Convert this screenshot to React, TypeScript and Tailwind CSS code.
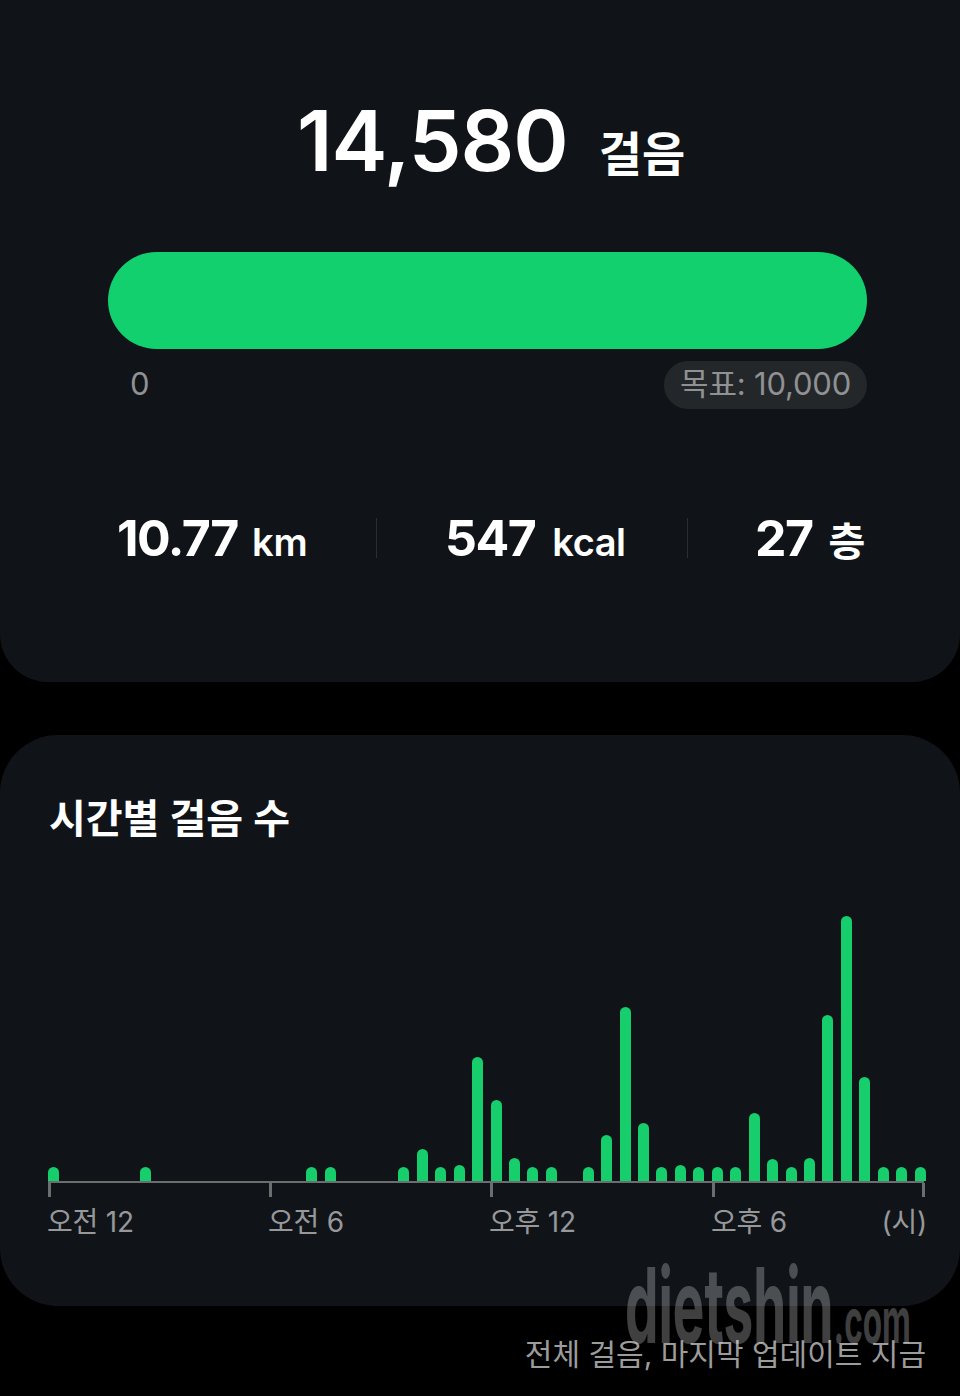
const heights: Record<number, number> = {
  0: 14, 5: 14, 14: 14, 15: 14, 19: 14, 20: 32, 21: 14, 22: 16, 23: 124, 24: 81, 25: 23, 26: 14, 27: 14,
  29: 14, 30: 46, 31: 174, 32: 58, 33: 14, 34: 16, 35: 14, 36: 14, 37: 14, 38: 68, 39: 22, 40: 14, 41: 23,
  42: 166, 43: 265, 44: 104, 45: 14, 46: 14, 47: 14,
};

const font = { fontFamily: '"Inter", "Noto Sans CJK KR", sans-serif' };
const slots = Array.from({ length: 48 }, (_, i) => heights[i] ?? 0);

function Tick() {
  return <div className="h-[14px] w-[3px] bg-[#6b6d6f]" />;
}

export default function App() {
  return (
    <div className="relative h-[1396px] w-[960px] overflow-hidden bg-black" style={font}>
      {/* Summary card */}
      <div className="h-[682px] rounded-b-[48px] bg-[#101419] pt-[93px]">
        <div className="ml-[297px] flex items-baseline text-white">
          <span className="text-[84px] leading-[96px] font-semibold tracking-[-1px]">14,580</span>
          <span className="ml-[31px] text-[47px] font-bold">걸음</span>
        </div>

        <div className="mt-[62px] ml-[108px] h-[97px] w-[759px] rounded-full bg-[#13d06f]" />

        <div className="mt-[12px] ml-[108px] flex w-[759px] items-center justify-between text-[31px] text-[#8f9193]">
          <span className="ml-[22px]">0</span>
          <span className="flex h-[48px] items-center rounded-full bg-[#24272a] px-[16px] tracking-[-0.2px]">목표: 10,000</span>
        </div>

        <div className="mt-[92px] flex items-center pl-[117px] text-white">
          <div className="flex w-[259px] items-baseline">
            <span className="text-[50px] font-bold tracking-[-1.5px]">10.77</span>
            <span className="ml-[14px] text-[38px] font-semibold">km</span>
          </div>
          <div className="h-[40px] w-[1px] bg-[#2a2d31]" />
          <div className="ml-[68px] flex w-[242px] items-baseline">
            <span className="text-[50px] font-bold tracking-[-1.5px]">547</span>
            <span className="ml-[17px] text-[38px] font-semibold tracking-[-0.5px]">kcal</span>
          </div>
          <div className="h-[40px] w-[1px] bg-[#2a2d31]" />
          <div className="ml-[67px] flex items-baseline">
            <span className="text-[50px] font-bold tracking-[-1.5px]">27</span>
            <span className="ml-[16px] text-[40px] leading-[40px] font-semibold">층</span>
          </div>
        </div>
      </div>

      {/* Hourly card */}
      <div className="mt-[53px] h-[571px] rounded-[58px] bg-[#101419] pt-[58px]">
        <h2 className="ml-[49px] text-[40px] leading-[52px] font-semibold text-white">시간별 걸음 수</h2>

        <div className="mt-[71px] ml-[48px] flex h-[265px] w-[878px] items-end justify-between">
          {slots.map((h, i) => (
            <div key={i} className="w-[11px] rounded-t-full bg-[#16cf6c]" style={{ height: h }} />
          ))}
        </div>

        <div className="ml-[48px] h-[2px] w-[876px] bg-[#6b6d6f]" />

        <div className="ml-[48px] grid w-[877px] grid-cols-[221px_221px_222px_1fr]">
          <Tick />
          <Tick />
          <Tick />
          <div className="flex justify-between">
            <Tick />
            <Tick />
          </div>
        </div>

        <div className="mt-[5px] ml-[47px] grid w-[880px] grid-cols-[221px_221px_222px_1fr] text-[28px] leading-[40px] tracking-[-0.2px] text-[#96989a]">
          <span>오전 12</span>
          <span>오전 6</span>
          <span>오후 12</span>
          <div className="flex justify-between">
            <span>오후 6</span>
            <span>(시)</span>
          </div>
        </div>
      </div>

      <p className="mt-[28px] pr-[34px] text-right text-[30px] leading-[40px] text-[#9c9c9c]">
        전체 걸음, 마지막 업데이트 지금
      </p>

      {/* Watermark */}
      <div className="pointer-events-none absolute top-[1245px] left-[625px] flex origin-left scale-x-[0.51] items-baseline font-bold whitespace-nowrap text-white/25">
        <span className="text-[104px] leading-[120px]">dietshin</span>
        <span className="text-[62px] leading-[120px]">.com</span>
      </div>
    </div>
  );
}
